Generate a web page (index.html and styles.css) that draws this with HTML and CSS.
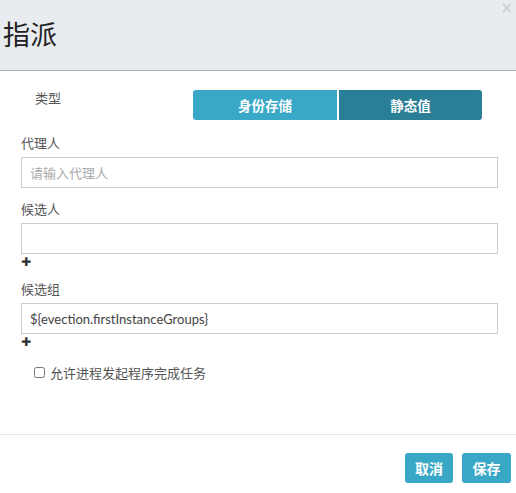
FILE: index.html
```html
<!DOCTYPE html>
<html>
<head>
<meta charset="utf-8">
<link rel="stylesheet" href="styles.css">
</head>
<body>
<div class="modal">
  <div class="header">
    <h1 class="title">指派</h1>
    <span class="close">×</span>
  </div>
  <div class="body">
    <div class="type-row">
      <span class="type-label">类型</span>
      <div class="seg">
        <button class="seg-btn">身份存储</button>
        <button class="seg-btn active">静态值</button>
      </div>
    </div>
    <div class="field">
      <label class="label">代理人</label>
      <input class="input" placeholder="请输入代理人">
    </div>
    <div class="field">
      <label class="label">候选人</label>
      <input class="input">
      <span class="plus">✚</span>
    </div>
    <div class="field">
      <label class="label">候选组</label>
      <input class="input" value="${evection.firstInstanceGroups}">
      <span class="plus">✚</span>
    </div>
    <label class="check"><input type="checkbox" class="cb"><span>允许进程发起程序完成任务</span></label>
  </div>
  <div class="footer">
    <button class="btn">取消</button>
    <button class="btn">保存</button>
  </div>
</div>
</body>
</html>
```
FILE: styles.css
```css
* { box-sizing: border-box; }
html, body { margin: 0; padding: 0; background: #fff; }
body { font-family: "Noto Sans CJK SC", "Noto Sans", sans-serif; color: #555; }
.modal { width: 516px; height: 493px; display: flex; flex-direction: column; }
.header { position: relative; height: 71px; background: #e8ecf0; border-bottom: 1px solid #a8afb7; padding: 0 0 0 3px; display: flex; align-items: center; }
.title { margin: 0; font-size: 27px; font-weight: normal; color: #222; line-height: 1; margin-top: -4px; }
.close { position: absolute; right: 3px; top: 1px; font-size: 15px; line-height: 1; color: #c4c8cc; font-family: "DejaVu Sans", sans-serif; }
.body { padding: 0 18px 0 21px; flex: 1; }
.type-row { display: flex; align-items: flex-start; margin-top: 19px; height: 45px; }
.type-label { font-size: 13px; color: #555; margin-left: 14px; line-height: 16px; }
.seg { display: flex; gap: 2px; margin-left: 132px; }
.seg-btn { border: none; height: 30px; width: 144px; font-family: inherit; font-size: 13.5px; font-weight: bold; color: #fff; background: #38a8c6; padding: 0; border-radius: 3px 0 0 3px; }
.seg-btn.active { background: #2a7e95; width: 143px; border-radius: 0 3px 3px 0; }
.field { display: flex; flex-direction: column; align-items: flex-start; }
.label { font-size: 13px; color: #555; line-height: 16px; margin-bottom: 6px; }
.input { width: 477px; height: 31px; border: 1px solid #cccccc; font-family: Lato, "Noto Sans CJK SC", sans-serif; font-size: 13px; color: #444; padding: 0 8px; outline: none; }
.input::placeholder { color: #aaa; font-family: "Noto Sans CJK SC", sans-serif; }
.field + .field { margin-top: 13px; }
.plus { font-size: 12px; line-height: 12px; color: #333; margin-top: 2px; font-family: "DejaVu Sans", sans-serif; }
.check { display: flex; align-items: center; margin: 15px 0 0 13px; font-size: 13px; color: #555; }
.cb { margin: 0 5px 0 0; width: 11px; height: 11px; }
.footer { height: 59px; border-top: 1px solid #e5e5e5; display: flex; justify-content: flex-end; align-items: flex-start; padding: 18px 5px 0 0; gap: 9px; }
.btn { border: none; background: #38a8c6; color: #fff; font-family: inherit; font-size: 14px; font-weight: bold; height: 30px; width: 48px; border-radius: 3px; padding: 0; }
.btn + .btn { width: 49px; }
```
